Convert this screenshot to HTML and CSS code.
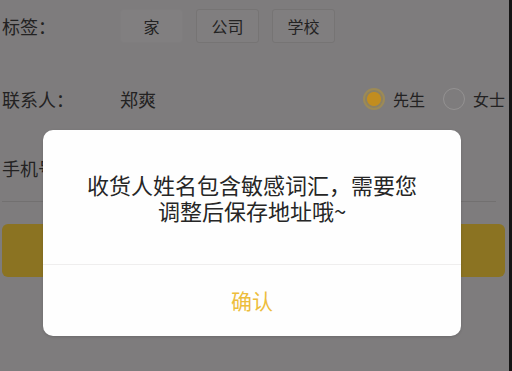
FILE: index.html
```html
<!DOCTYPE html>
<html lang="zh-CN">
<head>
<meta charset="utf-8">
<title>地址编辑</title>
<link rel="stylesheet" href="styles.css">
</head>
<body>
<div class="screen">
  <div class="page">
    <div class="row row-tags">
      <span class="label">标签：</span>
      <div class="tags">
        <span class="tag tag-plain">家</span>
        <span class="tag">公司</span>
        <span class="tag">学校</span>
      </div>
    </div>
    <div class="row row-contact">
      <span class="label">联系人：</span>
      <span class="value">郑爽</span>
      <div class="genders">
        <span class="radio radio-on"></span><span class="gender">先生</span>
        <span class="radio"></span><span class="gender">女士</span>
      </div>
    </div>
    <div class="row row-phone">
      <span class="label">手机号：</span>
    </div>
    <div class="save"></div>
  </div>
  <div class="dialog">
    <div class="message">收货人姓名包含敏感词汇，需要您调整后保存地址哦~</div>
    <div class="actions">确认</div>
  </div>
</div>
</body>
</html>
```

FILE: styles.css
```css
* { box-sizing: border-box; }
html, body { margin: 0; padding: 0; }
body {
  width: 512px;
  height: 371px;
  overflow: hidden;
  background: #151515;
  font-family: "Noto Sans CJK SC", "Noto Sans", sans-serif;
}
.screen {
  position: relative;
  width: 509px;
  height: 371px;
  background: #7e7c7d;
  overflow: hidden;
}
.page {
  display: flex;
  flex-direction: column;
  padding: 0 4px 0 2px;
  color: #232222;
}
.row {
  display: flex;
  align-items: center;
}
.label {
  width: 118px;
  font-size: 18px;
  line-height: 20px;
  white-space: nowrap;
}
.row-tags { height: 52px; }
.tags {
  display: flex;
  gap: 13px;
}
.tag {
  width: 63px;
  height: 34px;
  display: flex;
  align-items: center;
  justify-content: center;
  font-size: 16px;
  border: 1px solid #767474;
  border-radius: 3px;
  background: #807e7f;
}
.tag-plain {
  border-color: #7f7d7e;
  background: #817f80;
}
.row-contact {
  height: 46px;
  margin-top: 24px;
}
.value {
  font-size: 18px;
  flex: 1;
}
.genders {
  display: flex;
  align-items: center;
}
.radio {
  width: 22px;
  height: 22px;
  border-radius: 50%;
  border: 1.5px solid #949292;
  margin-right: 8px;
}
.radio-on {
  border: 2px solid #9c8a56;
  background: radial-gradient(circle, #c28d1f 0 6.5px, #8c8163 7.5px);
}
.gender {
  font-size: 16px;
  margin-right: 18px;
}
.gender:last-child { margin-right: 0; }
.row-phone {
  height: 68px;
  margin-top: 12px;
  margin-right: 9px;
  border-bottom: 1px solid #727070;
  overflow: hidden;
}
.save {
  height: 53px;
  margin-top: 22px;
  border-radius: 6px;
  background: #8b7322;
}
.dialog {
  position: absolute;
  left: 43px;
  top: 130px;
  width: 418px;
  height: 206px;
  border-radius: 10px;
  background: #fefefe;
  display: flex;
  flex-direction: column;
  box-shadow: 0 1px 3px rgba(0, 0, 0, 0.15);
}
.message {
  height: 135px;
  padding: 0 43px;
  display: flex;
  align-items: center;
  justify-content: center;
  text-align: center;
  font-size: 22px;
  line-height: 26px;
  color: #262626;
  border-bottom: 1px solid #efeeee;
}
.actions {
  flex: 1;
  display: flex;
  align-items: center;
  justify-content: center;
  font-size: 21px;
  color: #edbd3c;
  padding-bottom: 2px;
}
```
